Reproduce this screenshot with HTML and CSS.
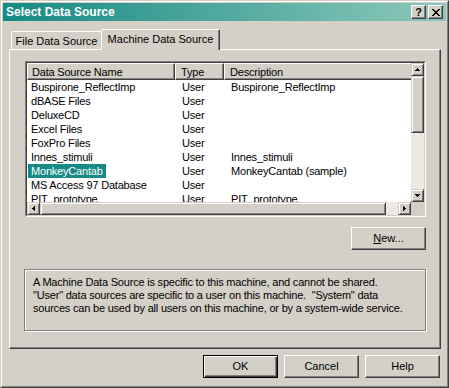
FILE: index.html
```html
<!DOCTYPE html>
<html>
<head>
<meta charset="utf-8">
<title>Select Data Source</title>
<link rel="stylesheet" href="styles.css">
</head>
<body>
<div class="window">
  <div class="frame">
    <div class="titlebar">
      <span class="title">Select Data Source</span>
      <div class="tbtns">
        <div class="tbtn help">?</div>
        <div class="tbtn close"><svg width="8" height="7" viewBox="0 0 8 7"><path d="M0 0h2v1H0zM6 0h2v1H6zM1 1h2v1H1zM5 1h2v1H5zM2 2h4v1H2zM3 3h2v1H3zM2 4h4v1H2zM1 5h2v1H1zM5 5h2v1H5zM0 6h2v1H0zM6 6h2v1H6z" fill="#000"/></svg></div>
      </div>
    </div>
    <div class="tabs">
      <div class="tab file">File Data Source</div>
      <div class="tab sel">Machine Data Source</div>
    </div>
    <div class="panel">
      <div class="list">
        <div class="list-in">
          <div class="view">
            <div class="hdr">
              <div class="hc c1">Data Source Name</div>
              <div class="hc c2">Type</div>
              <div class="hc c3">Description</div>
            </div>
            <div class="row"><div class="c1"><span>Buspirone_ReflectImp</span></div><div class="c2">User</div><div class="c3">Buspirone_ReflectImp</div></div>
            <div class="row"><div class="c1"><span>dBASE Files</span></div><div class="c2">User</div><div class="c3"></div></div>
            <div class="row"><div class="c1"><span>DeluxeCD</span></div><div class="c2">User</div><div class="c3"></div></div>
            <div class="row"><div class="c1"><span>Excel Files</span></div><div class="c2">User</div><div class="c3"></div></div>
            <div class="row"><div class="c1"><span>FoxPro Files</span></div><div class="c2">User</div><div class="c3"></div></div>
            <div class="row"><div class="c1"><span>Innes_stimuli</span></div><div class="c2">User</div><div class="c3">Innes_stimuli</div></div>
            <div class="row selected"><div class="c1"><span>MonkeyCantab</span></div><div class="c2">User</div><div class="c3">MonkeyCantab (sample)</div></div>
            <div class="row"><div class="c1"><span>MS Access 97 Database</span></div><div class="c2">User</div><div class="c3"></div></div>
            <div class="row"><div class="c1"><span>PIT_prototype</span></div><div class="c2">User</div><div class="c3">PIT_prototype</div></div>
          </div>
          <div class="vscroll">
            <div class="sb arr"><svg width="5" height="3" viewBox="0 0 5 3"><path d="M2 0h1v1H2zM1 1h3v1H1zM0 2h5v1H0z" fill="#000"/></svg></div>
            <div class="sb vthumb"></div>
            <div class="track"></div>
            <div class="sb arr"><svg width="5" height="3" viewBox="0 0 5 3"><path d="M0 0h5v1H0zM1 1h3v1H1zM2 2h1v1H2z" fill="#000"/></svg></div>
          </div>
          <div class="hscroll">
            <div class="sb arr"><svg width="3" height="5" viewBox="0 0 3 5"><path d="M2 0h1v5H2zM1 1h1v3H1zM0 2h1v1H0z" fill="#000"/></svg></div>
            <div class="sb hthumb"></div>
            <div class="track"></div>
            <div class="sb arr"><svg width="3" height="5" viewBox="0 0 3 5"><path d="M0 0h1v5H0zM1 1h1v3H1zM2 2h1v1H2z" fill="#000"/></svg></div>
          </div>
          <div class="corner"></div>
        </div>
      </div>
      <div class="newrow">
        <button class="btn"><u>N</u>ew...</button>
      </div>
      <div class="info">A Machine Data Source is specific to this machine, and cannot be shared.<br>"User" data sources are specific to a user on this machine.&nbsp; "System" data<br>sources can be used by all users on this machine, or by a system-wide service.</div>
    </div>
    <div class="buttons">
      <button class="btn default">OK</button>
      <button class="btn">Cancel</button>
      <button class="btn">Help</button>
    </div>
  </div>
</div>
</body>
</html>
```

FILE: styles.css
```css
html, body {
  margin: 0;
  padding: 0;
}
body {
  width: 449px;
  height: 388px;
  overflow: hidden;
  background: #d4d0c8;
  font-family: "Liberation Sans", Arial, sans-serif;
  font-size: 11px;
  letter-spacing: -0.2px;
  color: #000;
}
.window {
  box-sizing: border-box;
  width: 449px;
  height: 388px;
  border: 1px solid;
  border-color: #d4d0c8 #404040 #404040 #d4d0c8;
  background: #d4d0c8;
}
.frame {
  box-sizing: border-box;
  height: 100%;
  border: 1px solid;
  border-color: #fff #808080 #808080 #fff;
  padding: 1px;
}
.titlebar {
  height: 18px;
  display: flex;
  align-items: center;
  justify-content: space-between;
  padding: 0 3px 0 3px;
  background: linear-gradient(to right, #168a84, #8ec8bb);
}
.title {
  color: #fff;
  font-weight: bold;
  font-size: 12px;
  letter-spacing: 0;
  line-height: 18px;
}
.tbtns {
  display: flex;
  gap: 2px;
}
.tbtn {
  box-sizing: border-box;
  width: 15px;
  height: 14px;
  background: #d4d0c8;
  border: 1px solid;
  border-color: #fff #404040 #404040 #fff;
  box-shadow: inset -1px -1px #808080;
  display: flex;
  align-items: center;
  justify-content: center;
}
.tbtn.help {
  font-weight: bold;
  font-size: 11px;
  line-height: 12px;
  letter-spacing: 0;
}
.tabs {
  height: 28px;
  display: flex;
  align-items: flex-end;
  padding-left: 8px;
  letter-spacing: 0;
}
.tab {
  box-sizing: border-box;
  background: #d4d0c8;
  border-top: 1px solid #fff;
  border-left: 1px solid #fff;
  border-radius: 2px 2px 0 0;
  text-align: center;
  line-height: 14px;
  white-space: nowrap;
}
.tab.file {
  width: 90px;
  height: 18px;
  padding-top: 2px;
}
.tab.sel {
  position: relative;
  z-index: 1;
  width: 119px;
  height: 21px;
  margin-bottom: -1px;
  padding-top: 2px;
  border-right: 1px solid #404040;
  box-shadow: inset -1px 0 #808080;
}
.panel {
  position: relative;
  box-sizing: border-box;
  height: 300px;
  margin: 0 5px 0 6px;
  padding: 11px 14px 0 15px;
  border: 1px solid;
  border-color: #fff #404040 #404040 #fff;
  box-shadow: inset -1px -1px #808080;
}
.list {
  box-sizing: border-box;
  height: 156px;
  border: 1px solid;
  border-color: #808080 #fff #fff #808080;
}
.list-in {
  box-sizing: border-box;
  height: 100%;
  border: 1px solid;
  border-color: #404040 #d4d0c8 #d4d0c8 #404040;
  background: #fff;
  display: grid;
  grid-template-columns: 1fr 13px;
  grid-template-rows: 1fr 13px;
}
.view {
  overflow: hidden;
  white-space: nowrap;
}
.hdr, .row {
  display: grid;
  grid-template-columns: 148px 49px 260px;
}
.hc {
  box-sizing: border-box;
  height: 17px;
  line-height: 16px;
  background: #d4d0c8;
  border: 1px solid;
  border-color: #fff #404040 #404040 #fff;
  box-shadow: inset -1px -1px #808080;
  overflow: hidden;
}
.hc.c1 { padding-left: 4px; }
.hc.c2 { padding-left: 5px; }
.hc.c3 { padding-left: 5px; }
.row {
  height: 14px;
  line-height: 14px;
}
.row .c1 { padding-left: 1px; }
.row .c1 span {
  display: inline-block;
  padding: 0 3px;
  height: 14px;
}
.row .c2 { padding-left: 7px; }
.row .c3 { padding-left: 7px; }
.row.selected .c1 span {
  background: #168a84;
  color: #fff;
}
.sb {
  box-sizing: border-box;
  background: #d4d0c8;
  border: 1px solid;
  border-color: #d4d0c8 #404040 #404040 #d4d0c8;
  box-shadow: inset 1px 1px #fff, inset -1px -1px #808080;
  display: flex;
  align-items: center;
  justify-content: center;
}
.sb svg { display: block; }
.arr {
  width: 13px;
  height: 13px;
  flex: none;
}
.track {
  flex: 1;
  background: #ece9e3;
}
.vscroll {
  display: flex;
  flex-direction: column;
  background: #ece9e3;
}
.vthumb {
  height: 57px;
  flex: none;
}
.hscroll {
  display: flex;
  background: #ece9e3;
}
.hthumb {
  width: 346px;
  flex: none;
}
.corner {
  background: #d4d0c8;
}
.newrow {
  display: flex;
  justify-content: flex-end;
  margin-top: 10px;
}
.btn {
  box-sizing: border-box;
  width: 75px;
  height: 23px;
  margin: 0;
  padding: 0;
  font: inherit;
  letter-spacing: 0;
  color: #000;
  background: #d4d0c8;
  border: 1px solid;
  border-color: #fff #404040 #404040 #fff;
  box-shadow: inset -1px -1px #808080;
  text-align: center;
  line-height: 19px;
}
.btn.default {
  border-color: #000;
  box-shadow: inset 1px 1px #fff, inset -1px -1px #404040, inset -2px -2px #808080;
}
.info {
  box-sizing: border-box;
  width: 402px;
  height: 62px;
  margin: 19px 0 0 -1px;
  padding: 6px 8px 0;
  border: 1px solid #808080;
  box-shadow: inset 1px 1px #fff, 1px 1px #fff;
  line-height: 13px;
  white-space: nowrap;
}
.buttons {
  display: flex;
  justify-content: flex-end;
  gap: 6px;
  margin-top: 6px;
  padding-right: 6px;
}
```
